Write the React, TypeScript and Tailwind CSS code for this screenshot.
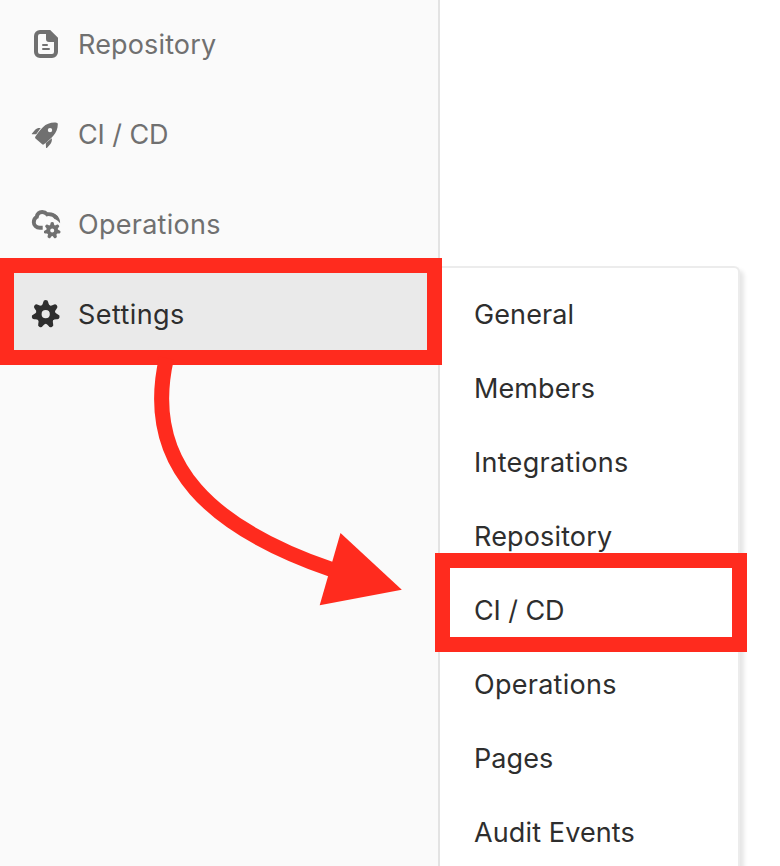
import type { ReactNode } from "react";

const TEETH = [0, 1, 2, 3, 4, 5, 6].map((n) => (n * 360) / 7);

function DocumentIcon() {
  return (
    <svg width="32" height="32" viewBox="0 0 16 16" fill="currentColor">
      <path
        fillRule="evenodd"
        d="M5 1h5.100L14 4.900V12a3 3 0 0 1-3 3H5a3 3 0 0 1-3-3V4a3 3 0 0 1 3-3zm0 2a1 1 0 0 0-1 1v8a1 1 0 0 0 1 1h6a1 1 0 0 0 1-1V7H9.500A1.500 1.500 0 0 1 8 5.500V3z"
      />
      <path d="M6.500 8h2a.5.5 0 0 1 0 1h-2a.5.5 0 0 1 0-1zm0 2h3a.5.5 0 0 1 0 1h-3a.5.5 0 0 1 0-1z" />
    </svg>
  );
}

function RocketIcon() {
  return (
    <svg width="32" height="32" viewBox="0 0 32 32" fill="currentColor">
      <path
        fillRule="evenodd"
        d="M26.500 4.700c1 .1 1.300.5 1.300 1.500 0 4.500-1.700 8.300-4.500 11.600-2.600 3-5.700 5.700-9.400 8.500-.6.500-1.200.5-1.700 0l-6.700-5.800c-.5-.5-.6-1.100-.2-1.700 2.300-3.700 4.600-6.800 7.600-9.600 3.800-3.500 8.200-5 13.600-4.500zM20 9.900a2.200 2.200 0 1 0 0 4.400 2.200 2.200 0 0 0 0-4.400z"
      />
      <path d="M10.700 10.100 6.200 16.200 2.300 16.200c-.6 0-.6-.5-.3-.8L5.200 11.800c1.400-1.400 3-2 5.500-1.700z" />
      <path d="M21.900 20.300c.2 2.400-.3 4.300-1.700 5.900l-3.300 3.700c-.4.400-.9.200-.9-.4l-.2-4.400z" />
    </svg>
  );
}

function CloudGearIcon() {
  return (
    <svg width="32" height="32" viewBox="0 0 32 32" fill="currentColor">
      <path
        d="M12.700 19.800H9.800C6.300 19.800 3.800 17.300 3.800 14.200c0-2.800 1.300-4.400 3-5.300C7.300 5.900 9.400 4 12.200 4c2.100 0 3.700.9 4.900 2.300C20.500 5.800 24 6.900 26.500 9.900"
        fill="none"
        stroke="currentColor"
        strokeWidth="3.900"
      />
      <path d="M24.500 6.100C28.300 7.900 30.300 11.200 30.100 15.200 28.800 13.400 26.700 12.100 24.500 10.800z" />
      <g transform="translate(22.200 22.400)">
        <path fillRule="evenodd" d="M0-5.700a5.700 5.700 0 1 0 0 11.400 5.700 5.700 0 0 0 0-11.400zm0 3.700a2 2 0 1 1 0 4 2 2 0 0 1 0-4z" />
        {TEETH.map((angle) => (
          <path key={angle} transform={`rotate(${angle})`} d="M-2.300-4.300-1.500-7.600Q-1.300-8.400 0-8.400T1.500-7.600L2.300-4.300z" />
        ))}
      </g>
    </svg>
  );
}

function GearIcon() {
  return (
    <svg width="32" height="32" viewBox="0 0 32 32" fill="currentColor">
      <g transform="translate(15.700 16.200)">
        <path fillRule="evenodd" d="M0-9.600a9.600 9.600 0 1 0 0 19.200 9.600 9.600 0 0 0 0-19.200zm0 5.500a4.100 4.100 0 1 1 0 8.200 4.100 4.100 0 0 1 0-8.200z" />
        {TEETH.map((angle) => (
          <path key={angle} transform={`rotate(${angle})`} d="M-4.300-8.200Q-2.900-9.600-2.500-12-2.300-14.200 0-14.200T2.500-12Q2.900-9.600 4.300-8.200z" />
        ))}
      </g>
    </svg>
  );
}

type NavItem = { label: string; icon: ReactNode; tone: string };

const navItems: NavItem[] = [
  { label: "Repository", icon: <DocumentIcon />, tone: "text-[#707070] tracking-[0.15px]" },
  { label: "CI / CD", icon: <RocketIcon />, tone: "text-[#707070] tracking-[-0.1px]" },
  { label: "Operations", icon: <CloudGearIcon />, tone: "text-[#707070] tracking-[0.27px]" },
  { label: "Settings", icon: <GearIcon />, tone: "bg-[#eaeaea] text-[#2e2e2e] tracking-[0.42px]" },
];

const menuItems = [
  { label: "General", spacing: "tracking-[0.1px]" },
  { label: "Members", spacing: "tracking-[0.1px]" },
  { label: "Integrations", spacing: "tracking-[0.28px]" },
  { label: "Repository", spacing: "tracking-[0.15px]" },
  { label: "CI / CD", spacing: "tracking-[-0.1px]" },
  { label: "Operations", spacing: "tracking-[0.27px]" },
  { label: "Pages", spacing: "tracking-[0.1px]" },
  { label: "Audit Events", spacing: "tracking-[0.12px]" },
];

export default function App() {
  return (
    <div className="relative flex h-[866px] w-[780px] overflow-hidden bg-white font-['Inter',sans-serif] text-[27px] leading-8">
      <nav className="w-[440px] shrink-0 border-r-2 border-[#e3e3e3] bg-[#fafafa]">
        <ul>
          {navItems.map((item) => (
            <li key={item.label} className={`flex h-[90px] items-center gap-4 pr-6 pb-[2px] pl-[30px] ${item.tone}`}>
              {item.icon}
              <span className="pt-[2px]">{item.label}</span>
            </li>
          ))}
        </ul>
      </nav>

      <div className="mt-[266px] h-[620px] w-[300px] shrink-0 rounded-tr-[6px] border-t-2 border-r-2 border-[#ececec] bg-white pt-[10px] shadow-[4px_4px_4px_rgba(0,0,0,0.1)]">
        <ul>
          {menuItems.map((item) => (
            <li key={item.label} className={`flex h-[74px] items-center pl-[34px] text-[#2e2e2e] ${item.spacing}`}>
              {item.label}
            </li>
          ))}
        </ul>
      </div>

      <div className="absolute top-[258px] left-0 h-[107px] w-[442px] border-[15px] border-l-[14px] border-[#ff2b1e]" />
      <div className="absolute top-[553px] left-[435px] h-[99px] w-[312px] border-[15px] border-[#ff2b1e]" />
      <svg className="absolute top-0 left-0" width="780" height="866" viewBox="0 0 780 866">
        <path d="M166.500 358C141.500 467 214 529 332 569.700" fill="none" stroke="#ff2b1e" strokeWidth="15" />
        <path d="M340.500 533 401.800 589.700 319.700 605.300z" fill="#ff2b1e" />
      </svg>
    </div>
  );
}
